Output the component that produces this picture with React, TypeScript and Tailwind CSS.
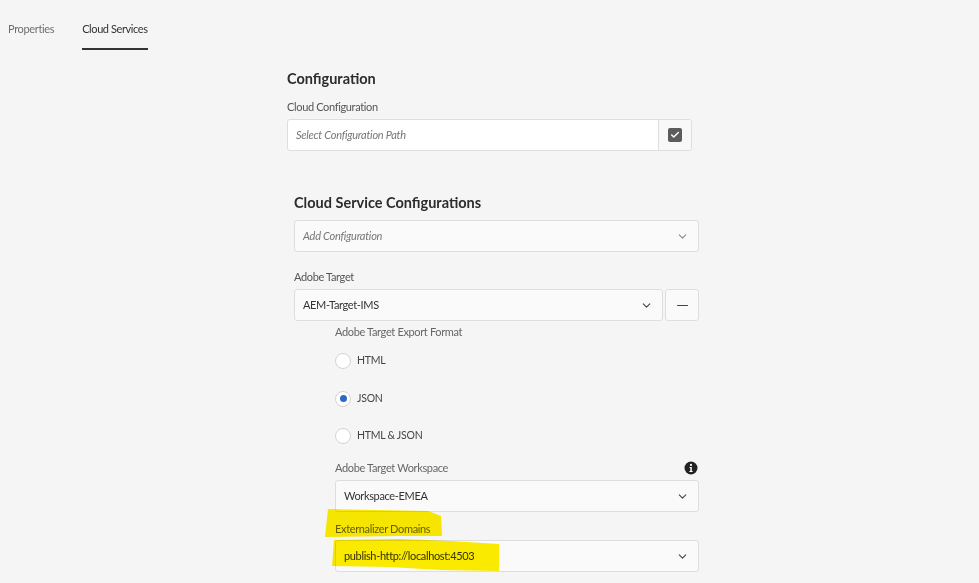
import { Check, ChevronDown, Minus } from 'lucide-react';

const FONT = "font-['Lato','Open_Sans',sans-serif]";

function Chevron({ light }: { light?: boolean }) {
  return (
    <ChevronDown
      size={13}
      strokeWidth={2}
      className={light ? 'text-[#8a8a8a]' : 'text-[#444]'}
    />
  );
}

function SelectBox({ value, italic }: { value: string; italic?: boolean }) {
  return (
    <div className="flex h-8 w-full items-center justify-between rounded-[3px] border border-[#dedede] bg-[#fafafa] pl-2 pr-[9px]">
      <span
        className={
          italic
            ? 'text-[11px] italic tracking-[-0.25px] text-[#777]'
            : 'text-[11px] tracking-[-0.35px] text-[#333]'
        }
      >
        {value}
      </span>
      <Chevron light={italic} />
    </div>
  );
}

function Radio({ label, checked }: { label: string; checked?: boolean }) {
  return (
    <div className="flex h-[16px] items-center gap-[6px]">
      <span className="flex h-[16px] w-[16px] items-center justify-center rounded-full border border-[#d4d4d4] bg-white">
        {checked && <span className="h-[7px] w-[7px] rounded-full bg-[#2c68c4]" />}
      </span>
      <span className="text-[10.5px] tracking-[-0.25px] text-[#444]">{label}</span>
    </div>
  );
}

export default function App() {
  return (
    <div className={`${FONT} relative h-[583px] w-[979px] overflow-hidden bg-[#f5f5f5]`}>
      <div className="flex gap-[28px] pl-2">
        <div className="pt-[21px] text-[11px] leading-4 tracking-[-0.35px] text-[#6e6e6e]">Properties</div>
        <div className="h-[50px] border-b-2 border-[#333] pt-[21px] text-[11px] leading-4 tracking-[-0.4px] text-[#333]">
          Cloud Services
        </div>
      </div>

      <div className="ml-[287px] w-[412px]">
        <h2 className="mt-[19px] text-[14.5px] font-bold leading-5 text-[#2c2c2c]">Configuration</h2>
        <div className="mt-[10px] text-[11px] leading-4 tracking-[-0.35px] text-[#555]">Cloud Configuration</div>
        <div className="mt-[4px] flex h-8 w-[405px] rounded-[3px] border border-[#dedede] bg-white">
          <div className="flex flex-1 items-center pl-[8px] text-[11px] italic tracking-[-0.25px] text-[#777]">
            Select Configuration Path
          </div>
          <div className="flex w-[33px] items-center justify-center rounded-r-[3px] border-l border-[#dedede] bg-[#f8f8f8]">
            <span className="flex h-[14px] w-[14px] items-center justify-center rounded-[2px] bg-[#5c5c5c]">
              <Check size={10} strokeWidth={3.5} className="text-white" />
            </span>
          </div>
        </div>

        <div className="ml-[7px] w-[405px]">
          <h2 className="mt-[42px] text-[14.5px] font-bold leading-5 text-[#2c2c2c]">Cloud Service Configurations</h2>
          <div className="mt-[7px]">
            <SelectBox value="Add Configuration" italic />
          </div>
          <div className="mt-[17px] text-[11px] leading-4 tracking-[-0.35px] text-[#555]">Adobe Target</div>
          <div className="mt-[4px] flex gap-[2px]">
            <div className="flex-1">
              <SelectBox value="AEM-Target-IMS" />
            </div>
            <div className="flex h-8 w-[34px] items-center justify-center rounded-[3px] border border-[#dedede] bg-[#fafafa]">
              <Minus size={17} strokeWidth={1.75} className="text-[#444]" />
            </div>
          </div>

          <div className="ml-[41px]">
            <div className="mt-[3px] text-[11px] leading-4 tracking-[-0.35px] text-[#666]">Adobe Target Export Format</div>
            <div className="mt-[13px] flex flex-col gap-[21.5px]">
              <Radio label="HTML" />
              <Radio label="JSON" checked />
              <Radio label="HTML & JSON" />
            </div>
            <div className="mt-[16px] flex h-4 items-center justify-between text-[11px] leading-4 tracking-[-0.35px] text-[#666]">
              <span>Adobe Target Workspace</span>
              <svg width="14" height="14" viewBox="0 0 14 14" className="mb-[1px] mr-[1px]">
                <circle cx="7" cy="7" r="6.5" fill="#222" />
                <circle cx="7" cy="3.9" r="1.1" fill="#fff" />
                <path d="M5.6 5.9h2.2v4.2h.9v1H5.4v-1h.9V6.9h-.7z" fill="#fff" />
              </svg>
            </div>
            <div className="mt-[4px]">
              <SelectBox value="Workspace-EMEA" />
            </div>
            <div className="mt-[9px] text-[11px] leading-4 tracking-[-0.35px] text-[#666]">Externalizer Domains</div>
            <div className="mt-[3px]">
              <SelectBox value="publish-http://localhost:4503" />
            </div>
          </div>
        </div>
      </div>

      {/* marker strokes over the two last fields */}
      <svg className="pointer-events-none absolute left-0 top-0 mix-blend-multiply" width="979" height="583">
        <path d="M328 509 L375 510 L428 511 L441 516 L442 536 L400 536 L325 537 Z" fill="#ffef00" />
        <path d="M334 540 L400 539 L450 541 L499 544 L499 571 L440 570 L390 567 L332 566 Z" fill="#ffef00" />
      </svg>
    </div>
  );
}
